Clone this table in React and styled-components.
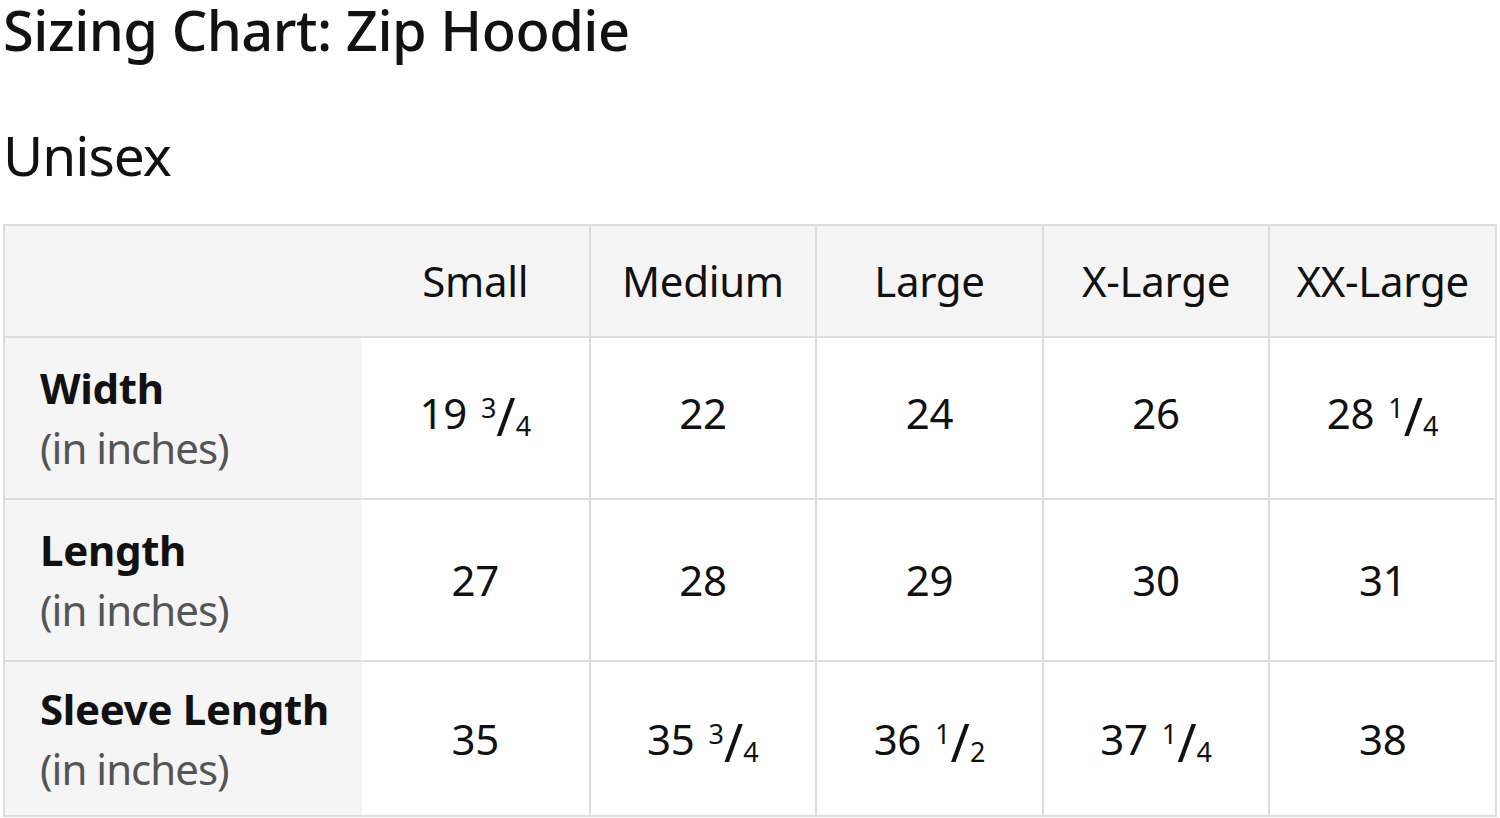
import styled, { createGlobalStyle } from "styled-components";

const Global = createGlobalStyle`
  body {
    margin: 0;
    background: #ffffff;
    font-family: "Noto Sans", "Open Sans", sans-serif;
    color: #111111;
  }
`;

const Page = styled.div`
  padding: 0 3px;
  width: 1494px;
`;

const Title = styled.h1`
  margin: 0;
  font-size: 56px;
  font-weight: 500;
  line-height: 58px;
  letter-spacing: -0.5px;
`;

const Subtitle = styled.h2`
  margin: 68px 0 40px;
  font-size: 55px;
  font-weight: 400;
  line-height: 58px;
  letter-spacing: -1px;
`;

const Table = styled.div`
  display: grid;
  grid-template-columns: 357px repeat(5, 1fr);
  border: 2px solid #dddddd;
`;

const Cell = styled.div`
  box-sizing: border-box;
  display: flex;
  flex-direction: column;
  justify-content: center;
  align-items: ${(p) => (p.$label ? "flex-start" : "center")};
  height: ${(p) => p.$height}px;
  padding-left: ${(p) => (p.$label ? "35px" : "0")};
  padding-bottom: ${(p) => p.$lift || 0}px;
  background: ${(p) => (p.$shade ? "#f5f5f5" : "#ffffff")};
  border-top: ${(p) => (p.$top ? "2px solid #dddddd" : "none")};
  border-left: ${(p) => (p.$left ? "2px solid #dddddd" : "none")};
  font-size: 42px;
  line-height: 60px;
  letter-spacing: -0.3px;
`;

const Name = styled.span`
  font-weight: 700;
`;

const Unit = styled.span`
  color: #555555;
  letter-spacing: -1px;
`;

const Value = styled.span`
  white-space: nowrap;
`;

const Frac = styled.span`
  margin-left: 14px;
  letter-spacing: 0;
`;

const Num = styled.span`
  font-size: 27px;
  line-height: 0;
  vertical-align: 11px;
`;

const Slash = styled.span`
  font-size: 52px;
  line-height: 0;
  vertical-align: -7px;
`;

const Den = styled.span`
  font-size: 27px;
  line-height: 0;
  vertical-align: -7px;
`;

function Measure({ whole, n, d }) {
  return (
    <Value>
      {whole}
      {n && (
        <Frac>
          <Num>{n}</Num>
          <Slash>/</Slash>
          <Den>{d}</Den>
        </Frac>
      )}
    </Value>
  );
}

const sizes = ["Small", "Medium", "Large", "X-Large", "XX-Large"];

const rows = [
  {
    name: "Width",
    height: 162,
    lift: 10,
    values: [["19", 3, 4], ["22"], ["24"], ["26"], ["28", 1, 4]],
  },
  {
    name: "Length",
    height: 162,
    lift: 0,
    values: [["27"], ["28"], ["29"], ["30"], ["31"]],
  },
  {
    name: "Sleeve Length",
    height: 155,
    lift: 0,
    values: [["35"], ["35", 3, 4], ["36", 1, 2], ["37", 1, 4], ["38"]],
  },
];

export default function App() {
  return (
    <Page>
      <Global />
      <Title>Sizing Chart: Zip Hoodie</Title>
      <Subtitle>Unisex</Subtitle>
      <Table>
        <Cell $height={110} $shade />
        {sizes.map((s, i) => (
          <Cell key={s} $height={110} $shade $left={i > 0}>
            {s}
          </Cell>
        ))}
        {rows.map((row) => [
          <Cell key={row.name} $height={row.height} $label $shade $top>
            <Name>{row.name}</Name>
            <Unit>(in inches)</Unit>
          </Cell>,
          ...row.values.map(([whole, n, d], i) => (
            <Cell
              key={row.name + i}
              $height={row.height}
              $lift={row.lift}
              $top
              $left={i > 0}
            >
              <Measure whole={whole} n={n} d={d} />
            </Cell>
          )),
        ])}
      </Table>
    </Page>
  );
}
